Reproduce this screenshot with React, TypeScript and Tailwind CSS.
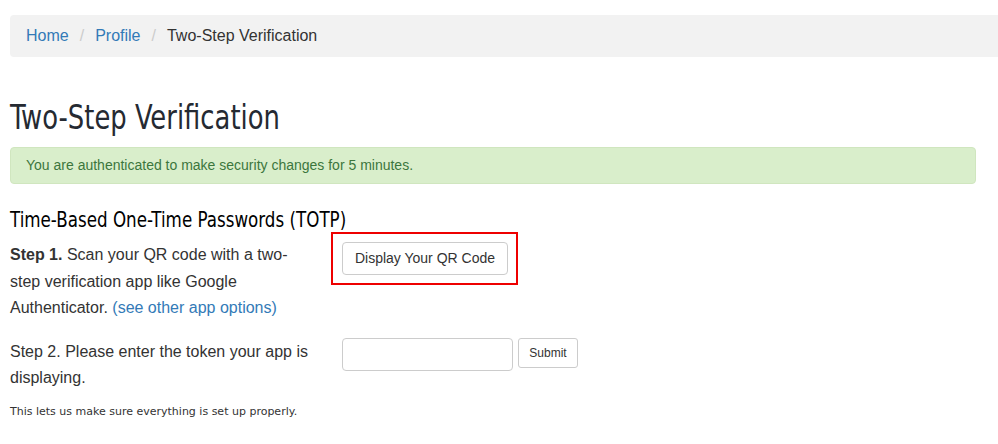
import React from 'react';

const narrow = { fontFamily: '"Liberation Sans Narrow", "DejaVu Sans Condensed", "Liberation Sans", sans-serif' };

const App: React.FC = () => {
  return (
    <div className="min-h-[444px] bg-white pl-[10px] pt-[15px] text-[#333] font-['Liberation_Sans',Arial,sans-serif]">
      {/* Breadcrumb */}
      <nav className="flex h-[42px] items-center rounded-l-[4px] bg-[#f2f2f2] pl-[16px] text-[16px]">
        <a href="#" className="text-[#337ab7]">Home</a>
        <span className="px-[11px] text-[#ccc]">/</span>
        <a href="#" className="text-[#337ab7]">Profile</a>
        <span className="px-[11px] text-[#ccc]">/</span>
        <span className="text-[#333]">Two-Step Verification</span>
      </nav>

      <h1 style={narrow} className="mt-[38px] h-[44px] text-[34px] leading-[44px] text-[#252a32]">
        <span className="inline-block origin-left scale-x-[0.845]">Two-Step Verification</span>
      </h1>

      {/* Alert */}
      <div className="mt-[8px] mr-[22px] flex h-[37px] items-center rounded-[4px] border border-[#d0e6bf] bg-[#d9eecb] pl-[15px] text-[14px] text-[#3c763d]">
        You are authenticated to make security changes for 5 minutes.
      </div>

      <h2 style={narrow} className="mt-[21px] h-[30px] text-[22px] leading-[30px] text-black">
        <span className="inline-block origin-left scale-x-[0.845]">Time-Based One-Time Passwords (TOTP)</span>
      </h2>

      {/* Step 1 */}
      <div className="mt-[7px] flex">
        <p className="w-[290px] text-[16px] leading-[26.5px] text-[#333]">
          <strong>Step 1.</strong> Scan your QR code with a two-step verification app like Google Authenticator.{' '}
          <a href="#" className="text-[#337ab7]">(see other app options)</a>
        </p>
        <div className="ml-[31px] -mt-[10px] h-[53px] w-[187px] border-2 border-[#e00] pl-[9px] pt-[8px]">
          <button className="h-[33px] w-[166px] rounded-[4px] border border-[#ccc] bg-white text-[14px] text-[#333]">
            Display Your QR Code
          </button>
        </div>
      </div>

      {/* Step 2 */}
      <div className="mt-[17px] flex">
        <p className="w-[300px] text-[16px] leading-[26.5px] text-[#333]">
          Step 2. Please enter the token your app is displaying.
        </p>
        <div className="ml-[32px] -mt-[1px] flex items-start gap-[5px]">
          <input className="h-[33px] w-[171px] rounded-[4px] border border-[#ccc] bg-white px-2 text-[14px] outline-none" />
          <button className="h-[30px] w-[60px] rounded-[3px] border border-[#ccc] bg-white text-[12px] text-[#333]">
            Submit
          </button>
        </div>
      </div>

      <p className="mt-[12px] font-['DejaVu_Sans',Verdana,sans-serif] text-[11px] text-[#333]">
        This lets us make sure everything is set up properly.
      </p>
    </div>
  );
};

export default App;
